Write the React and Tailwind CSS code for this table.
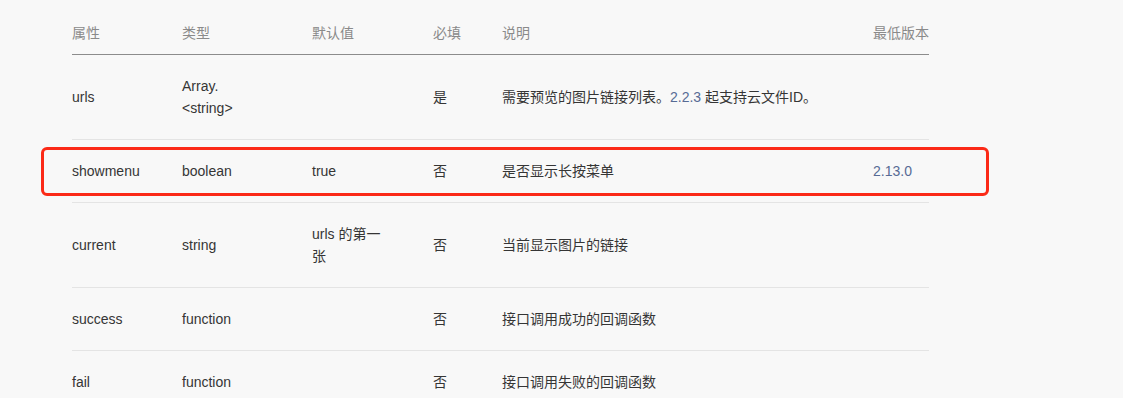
const rows = [
  { name: 'urls', type: <>Array.<br />&lt;string&gt;</>, def: '', req: '是', desc: <>需要预览的图片链接列表。<span className="text-[#576b95]">2.2.3</span> 起支持云文件ID。</>, ver: '' },
  { name: 'showmenu', type: 'boolean', def: 'true', req: '否', desc: '是否显示长按菜单', ver: '2.13.0' },
  { name: 'current', type: 'string', def: 'urls 的第一张', req: '否', desc: '当前显示图片的链接', ver: '' },
  { name: 'success', type: 'function', def: '', req: '否', desc: '接口调用成功的回调函数', ver: '' },
  { name: 'fail', type: 'function', def: '', req: '否', desc: '接口调用失败的回调函数', ver: '' },
];

const headers = ['属性', '类型', '默认值', '必填', '说明', '最低版本'];

export default function App() {
  return (
    <div
      className="relative h-[398px] w-[1123px] overflow-hidden bg-[#f8f8f8] text-[14px] leading-[22px] text-[#353535]"
      style={{ fontFamily: '"Liberation Sans", "Noto Sans CJK SC", sans-serif' }}
    >
      <div className="pl-[72px] pt-[12px]">
        <table className="w-[857px] table-fixed border-collapse text-left">
          <colgroup>
            <col className="w-[110px]" />
            <col className="w-[130px]" />
            <col className="w-[121px]" />
            <col className="w-[69px]" />
            <col className="w-[371px]" />
            <col className="w-[56px]" />
          </colgroup>
          <thead>
            <tr className="border-b border-[#8c8c8c]">
              {headers.map((h) => (
                <th key={h} className="py-[10px] font-normal text-[#8a8a8a]">
                  {h}
                </th>
              ))}
            </tr>
          </thead>
          <tbody>
            {rows.map((r) => (
              <tr key={r.name} className="border-b border-[#e4e4e4]">
                <td className="py-[20px]">{r.name}</td>
                <td className="py-[20px]">{r.type}</td>
                <td className="py-[20px] pr-[44px]">{r.def}</td>
                <td className="py-[20px]">{r.req}</td>
                <td className="py-[20px]">{r.desc}</td>
                <td className="py-[20px] whitespace-nowrap text-[#576b95]">{r.ver}</td>
              </tr>
            ))}
          </tbody>
        </table>
      </div>

      {/* highlight box around showmenu row */}
      <div className="pointer-events-none absolute left-[41px] top-[147px] h-[49px] w-[948px] rounded-[6px] border-[3px] border-[#fb2a17]" />
    </div>
  );
}
